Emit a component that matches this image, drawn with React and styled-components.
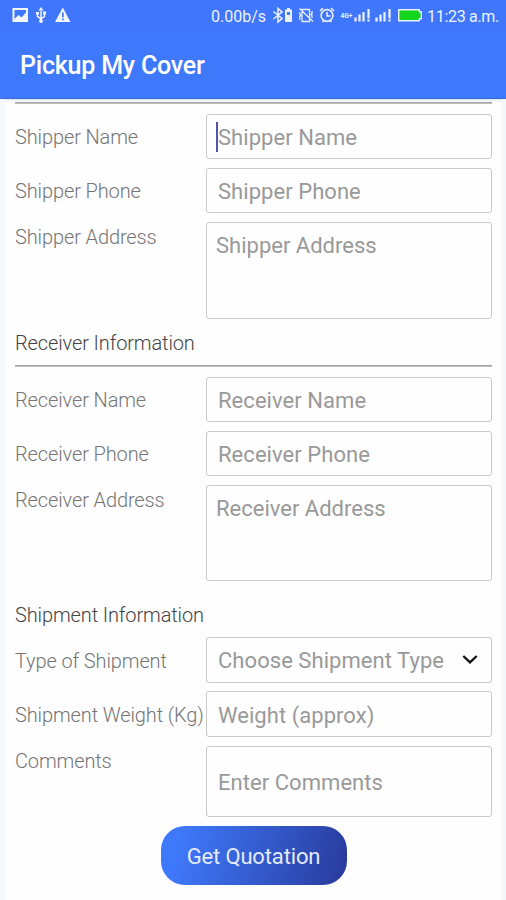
import React from 'react';
import styled, { createGlobalStyle } from 'styled-components';

const App = () => {
    return (
        <Screen>
            <GlobalStyle />
            <StatusBar />
            <TitleBar>
                <Title>Pickup My Cover</Title>
            </TitleBar>
            <Page>
                <Form>
                    <Rule $top={3} />
                    <Row $top={10}>
                        <Label>Shipper Name</Label>
                        <Field>
                            <Input placeholder="Shipper Name" />
                            <Caret />
                        </Field>
                    </Row>
                    <Row $top={9}>
                        <Label>Shipper Phone</Label>
                        <Field><Input placeholder="Shipper Phone" /></Field>
                    </Row>
                    <Row $top={9}>
                        <Label $high>Shipper Address</Label>
                        <Field $height={97}><TextArea placeholder="Shipper Address" /></Field>
                    </Row>

                    <Heading $top={12}>Receiver Information</Heading>
                    <Rule $top={9} />
                    <Row $top={10}>
                        <Label>Receiver Name</Label>
                        <Field><Input placeholder="Receiver Name" /></Field>
                    </Row>
                    <Row $top={9}>
                        <Label>Receiver Phone</Label>
                        <Field><Input placeholder="Receiver Phone" /></Field>
                    </Row>
                    <Row $top={9}>
                        <Label $high>Receiver Address</Label>
                        <Field $height={96}><TextArea placeholder="Receiver Address" /></Field>
                    </Row>

                    <Heading $top={22}>Shipment Information</Heading>
                    <Row $top={9}>
                        <Label>Type of Shipment</Label>
                        <Field $height={46}>
                            <Choice>Choose Shipment Type</Choice>
                            <Chevron />
                        </Field>
                    </Row>
                    <Row $top={8}>
                        <Label>Shipment Weight (Kg)</Label>
                        <Field $height={46}><Input placeholder="Weight (approx)" /></Field>
                    </Row>
                    <Row $top={9}>
                        <Label $high>Comments</Label>
                        <Field $height={71}><Input placeholder="Enter Comments" /></Field>
                    </Row>
                    <Button>Get Quotation</Button>
                </Form>
            </Page>
        </Screen>
    );
}

const StatusBar = () => {
    return (
        <Status>
            <svg width="80" height="32" viewBox="0 0 80 32" fill="#f2f6ff">
                <path fillRule="evenodd" d="M12.500 8h15.500v14H12.500z M14.500 10v9l4-4 3 2.500 4.500-5V10z" />
                <path d="M17 18l2-2 3 2.500 4-4V20h-9z" />
                <path d="M41 7l-2.500 3.500h5zM40.300 10h1.500v11h-1.500zM36 12h3v2.500h-.8v1.600l2.700 1.700v1.600L36.800 17v-2.500H36zM43 11.500h3v3h-.8V17l-3.900 2.200v-1.600l2.500-1.400v-1.700H43z" />
                <circle cx="41" cy="21" r="1.900" />
                <path fillRule="evenodd" d="M62.800 7.500L70.500 22H55zM62 12.500v4.700h1.700v-4.700zM62 18.500v1.800h1.700v-1.800z" />
            </svg>
            <Speed>0.00b/s</Speed>
            <svg width="156" height="32" viewBox="270 0 156 32" fill="none" stroke="#e8efff" strokeWidth="1.600">
                {/* bluetooth with its battery */}
                <path d="M273.500 11.500l8.500 7-4 3.500V8.500l4 3.500-8.500 7" />
                <path fill="#e8efff" stroke="none" fillRule="evenodd" d="M287 8h3v1.500h2V22h-7V9.500h2zM287 12v3h3v-3z" />
                {/* vibrate, crossed out */}
                <path d="M302 9.500h7.500v12H302zM299.500 8.500l13.500 13M299.800 12v2.500l1 1-1 1V20M312 11v2.500l-1 1 1 1V18" strokeWidth="1.300" />
                {/* alarm */}
                <circle cx="327" cy="15.500" r="5.900" />
                <path d="M327 12v4h3.500M320 11l3-3M334 11l-3-3M322.500 22l1.500-1.500M331.500 22l-1.500-1.500" />
                <text x="340.500" y="18" fill="#e8efff" stroke="none" fontFamily="Roboto, sans-serif" fontSize="6.500" fontWeight="700">4G+</text>
                <path d="M355.500 17.500v4M359.500 14.500v7M363.500 12v9.500M368.500 9v9.500M368.500 19.500v2" strokeWidth="2.300" />
                <path d="M376.500 17.500v4M380.500 14.500v7M384.500 12v9.500M389.500 9v9.500M389.500 19.500v2" strokeWidth="2.300" />
                <path d="M398.700 9.700h20.600v2h2v7h-2v2h-20.600z" fill="#13d51b" strokeWidth="1.400" />
            </svg>
            <Clock>11:23 a.m.</Clock>
        </Status>
    );
}

const Chevron = () => {
    return (
        <svg width="16" height="12" viewBox="0 0 16 12" fill="none" stroke="#111" strokeWidth="2.300">
            <path d="M1.300 2l6.700 6.300L14.700 2" />
        </svg>
    );
}

const GlobalStyle = createGlobalStyle`
    *{
        box-sizing: border-box;
    }
    body{
        margin: 0;
        font-family: Roboto, sans-serif;
        background-color: #fefefe;
    }
`;
const Screen = styled.div`
    height: 900px;
    overflow: hidden;
    display: flex;
    flex-direction: column;
`;
const Status = styled.div`
    height: 32px;
    flex-shrink: 0;
    display: flex;
    align-items: center;
    background-color: #3f76fb;
    color: #edf2ff;
    white-space: nowrap;
`;
const Speed = styled.span`
    width: 59px;
    margin-left: 131px;
    font-size: 16px;
`;
const Clock = styled.span`
    margin-left: 1px;
    font-size: 16px;
    letter-spacing: -0.300px;
`;
const TitleBar = styled.div`
    height: 67px;
    flex-shrink: 0;
    display: flex;
    align-items: center;
    padding: 1px 0 0 20px;
    background-color: #3f79fb;
    border-bottom: 1px solid #376bd8;
`;
const Title = styled.h1`
    margin: 0;
    font-size: 25px;
    font-weight: 500;
    letter-spacing: -0.200px;
    color: #fff;
`;
const Page = styled.div`
    flex: 1;
    padding: 0 4px 0 5px;
    background-color: #f5f7fa;
`;
const Form = styled.div`
    height: 100%;
    display: flex;
    flex-direction: column;
    padding: 0 10px;
    background: linear-gradient(#dfe3ea, #fefefe 3px);
`;
const Rule = styled.div`
    height: 2px;
    flex-shrink: 0;
    margin-top: ${props => props.$top}px;
    background: linear-gradient(#a5a5a5 50%, #c0c0c0 50%);
`;
const Row = styled.div`
    display: flex;
    margin-top: ${props => props.$top}px;
`;
const Label = styled.label`
    width: 191px;
    flex-shrink: 0;
    align-self: ${props => props.$high ? 'flex-start' : 'center'};
    margin-top: ${props => props.$high ? '3px' : '1px'};
    font-size: 20px;
    font-weight: 300;
    line-height: 24px;
    letter-spacing: -0.120px;
    color: #757575;
    white-space: nowrap;
`;
const Field = styled.div`
    position: relative;
    flex: 1;
    display: flex;
    align-items: center;
    height: ${props => props.$height || 45}px;
    border: 1.500px solid #c9c9c9;
    border-radius: 3px;
    background-color: #fefefe;
`;
const Input = styled.input`
    width: 100%;
    height: 100%;
    padding: 2px 11px 0;
    border: 0;
    outline: 0;
    background: transparent;
    font-family: Roboto, sans-serif;
    font-size: 22px;
    letter-spacing: 0.050px;

    &::placeholder{
        color: #999;
        opacity: 1;
    }
`;
const TextArea = styled.textarea`
    width: 100%;
    height: 100%;
    padding: 10px 9px;
    border: 0;
    outline: 0;
    resize: none;
    background: transparent;
    font-family: Roboto, sans-serif;
    font-size: 22px;

    &::placeholder{
        color: #999;
        opacity: 1;
    }
`;
const Caret = styled.span`
    position: absolute;
    left: 9px;
    top: 7px;
    width: 2px;
    height: 30px;
    background-color: #5058a5;
`;
const Choice = styled.span`
    width: 248px;
    padding: 1px 0 0 11px;
    margin-right: 7px;
    flex-shrink: 0;
    font-size: 22px;
    letter-spacing: 0.050px;
    color: #999;
    white-space: nowrap;
`;
const Heading = styled.h2`
    margin: ${props => props.$top}px 0 0;
    font-size: 20px;
    font-weight: 300;
    line-height: 25px;
    letter-spacing: -0.120px;
    color: #444;
`;
const Button = styled.button`
    align-self: center;
    width: 186px;
    height: 59px;
    flex-shrink: 0;
    margin: 9px 0 0;
    padding: 2px 0 0;
    border: 0;
    border-radius: 24px;
    background: linear-gradient(105deg, #3f79fb 10%, #283a9b 100%);
    color: #e4eaff;
    font-family: Roboto, sans-serif;
    font-size: 22px;
    letter-spacing: -0.150px;
`;
export default App;
